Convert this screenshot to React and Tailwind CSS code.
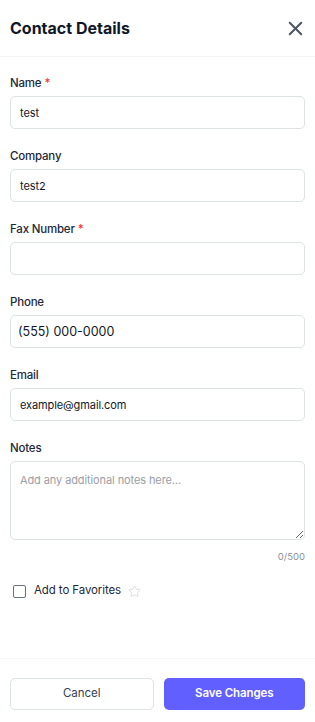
import { X, Star } from "lucide-react"

function Field({ label, required, children }) {
  return (
    <div className="mb-[17px]">
      <label className="block text-[11.5px] leading-5 font-medium tracking-[-0.2px] text-gray-800 mb-[3px]">
        {label}
        {required && <span className="text-red-500 ml-[3px]">*</span>}
      </label>
      {children}
    </div>
  )
}

export default function App() {
  const inputCls =
    "block w-full h-[33px] px-[9px] border border-[#dde2e2] rounded-[5px] text-[11px] tracking-[-0.1px] text-gray-900 bg-white outline-none"

  return (
    <div className="h-[722px] w-[315px] bg-white flex flex-col font-['Inter',sans-serif]">
      {/* Header */}
      <div className="h-[57px] flex items-center justify-between px-[10px] border-b border-gray-100 shrink-0">
        <h1 className="text-[16px] font-bold text-gray-900">Contact Details</h1>
        <button className="text-gray-600 mr-[-2px]">
          <X size={23} strokeWidth={2.1} />
        </button>
      </div>

      {/* Body */}
      <div className="flex-1 px-[10px] pt-[16px]">
        <Field label="Name" required>
          <input className={inputCls} defaultValue="test" />
        </Field>
        <Field label="Company">
          <input className={inputCls} defaultValue="test2" />
        </Field>
        <Field label="Fax Number" required>
          <input className={inputCls} defaultValue="" />
        </Field>
        <Field label="Phone">
          <input
            className="block w-full h-[33px] px-[7px] border border-[#dde2e2] rounded-[5px] text-[12.5px] text-gray-900 bg-white outline-none"
            defaultValue="(555) 000-0000"
          />
        </Field>
        <Field label="Email">
          <input className={inputCls} defaultValue="example@gmail.com" />
        </Field>

        <div>
          <label className="block text-[11.5px] leading-5 font-medium tracking-[-0.2px] text-gray-800 mb-[3px]">
            Notes
          </label>
          <textarea
            className="block w-full h-[79px] px-[9px] py-[8px] border border-[#dde2e2] rounded-[5px] text-[11px] tracking-[-0.1px] leading-5 text-gray-900 placeholder:text-[#9a9ea5] bg-white outline-none resize-y"
            placeholder="Add any additional notes here..."
          />
          <p className="text-right text-[9.5px] leading-4 text-[#8a8f98] mt-[9px]">0/500</p>
        </div>

        <div className="flex items-center mt-[16px] h-5">
          <span className="w-[13px] h-[13px] ml-[3px] border border-gray-500 rounded-[2px] bg-white" />
          <span className="ml-[8px] text-[11.5px] tracking-[-0.1px] text-gray-800">Add to Favorites</span>
          <Star size={13} strokeWidth={1.5} className="ml-[7px] text-gray-300" />
        </div>
      </div>

      {/* Footer */}
      <div className="border-t border-gray-100 px-[10px] pt-[19px] pb-[12px] flex gap-[10px] shrink-0">
        <button className="flex-1 h-[32px] border border-[#dde2e2] rounded-[5px] bg-white text-[11.5px] text-gray-700">
          Cancel
        </button>
        <button className="flex-1 h-[32px] rounded-[5px] bg-[#615fff] text-[11.5px] font-semibold tracking-[-0.1px] text-white">
          Save Changes
        </button>
      </div>
    </div>
  )
}
